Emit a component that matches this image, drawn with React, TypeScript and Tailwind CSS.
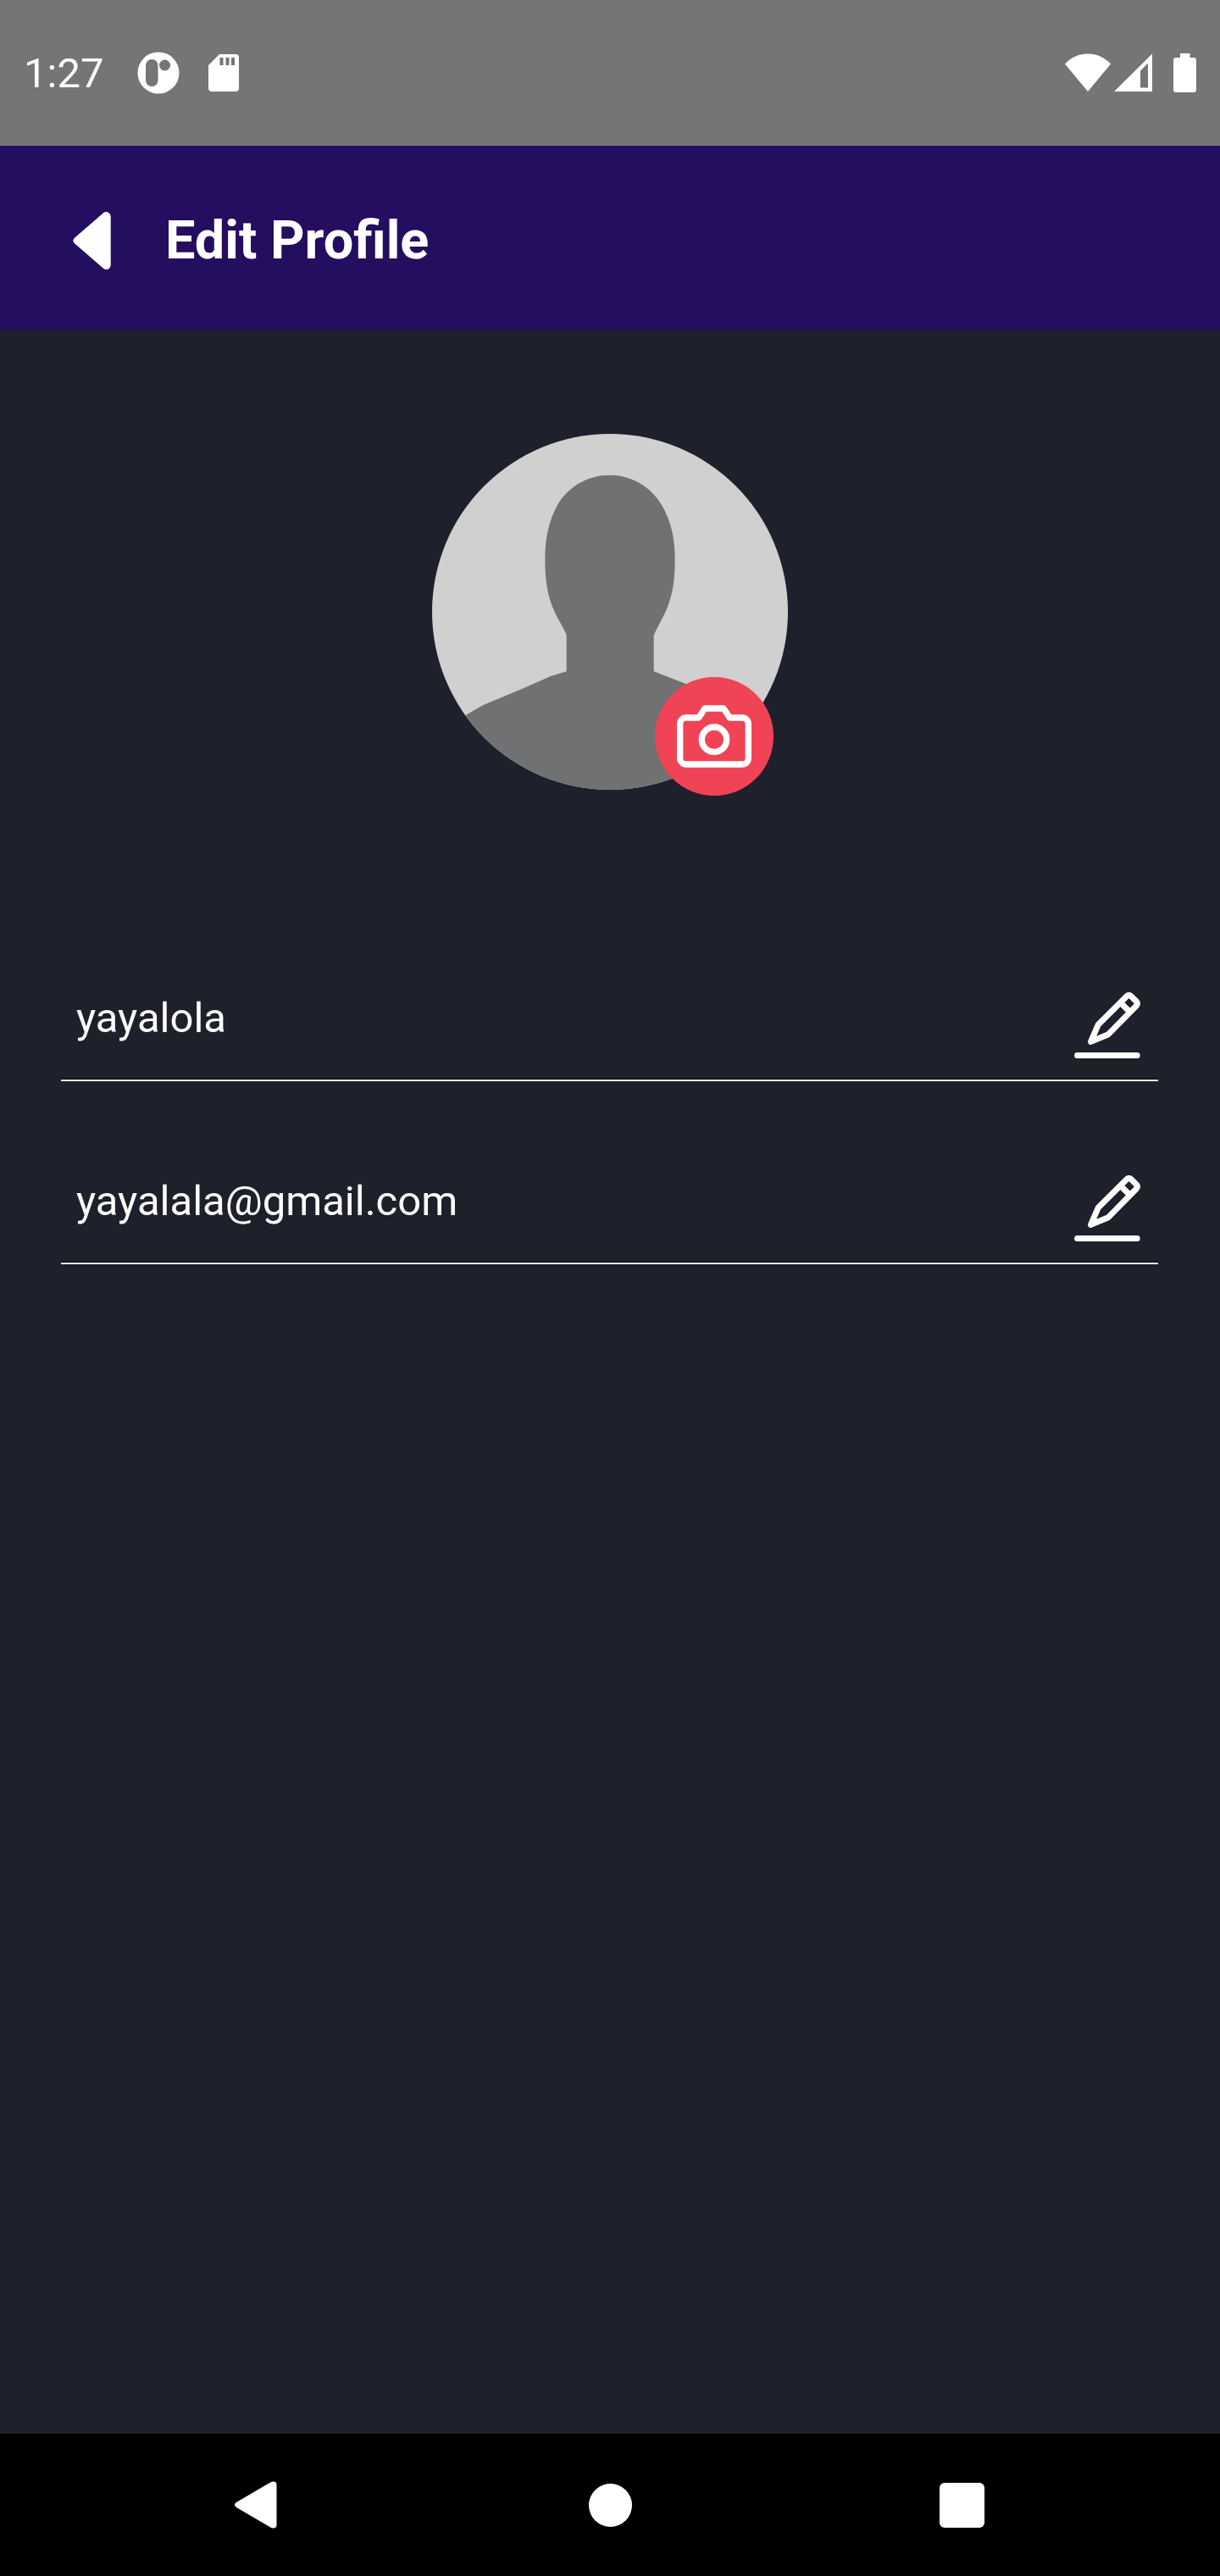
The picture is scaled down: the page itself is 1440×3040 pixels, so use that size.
import { FiCamera } from "react-icons/fi";

function StatusBar() {
  return (
    <div className="flex h-[172px] items-center justify-between bg-[#757575] px-7 text-white">
      <div className="flex items-center">
        <span className="pt-0.5 text-[49px] leading-[56px]">1:27</span>
        <svg className="ml-10 h-[50px] w-[50px]" viewBox="0 0 50 50" aria-hidden="true">
          <circle cx="25" cy="25" r="24.5" fill="#fff" />
          <rect x="10" y="9" width="14.5" height="32" rx="7.25" fill="#757575" />
          <circle cx="32.5" cy="16" r="6.5" fill="#757575" />
        </svg>
        <svg className="ml-[34px] h-[46px] w-9" viewBox="0 0 36 46" aria-hidden="true">
          <path
            d="M13 1H32a4 4 0 0 1 4 4V41a4 4 0 0 1-4 4H4a4 4 0 0 1-4-4V14z"
            fill="#fff"
          />
          <path d="M13.5 5h4v9h-4zM20.5 5h4v9h-4zM27 5h4v9h-4z" fill="#757575" />
        </svg>
      </div>
      <div className="flex items-center">
        <svg className="h-[46px] w-[54px]" viewBox="0 0 54 46" aria-hidden="true">
          <path d="M0 12.5C7 5 16 .5 27 .5S47 5 54 12.5L27 45z" fill="#fff" />
        </svg>
        <svg className="ml-1 h-[46px] w-[45px]" viewBox="0 0 45 46" aria-hidden="true">
          <path fillRule="evenodd" d="M45 .5V45H0zM40 11.5L31 20.5V40.5H40z" fill="#fff" />
        </svg>
        <svg className="ml-[25px] h-[46px] w-[27px]" viewBox="0 0 27 46" aria-hidden="true">
          <path
            d="M8 0H19.5V5H24a3 3 0 0 1 3 3V43a3 3 0 0 1-3 3H3a3 3 0 0 1-3-3V8a3 3 0 0 1 3-3H8z"
            fill="#fff"
          />
        </svg>
      </div>
    </div>
  );
}

function Header() {
  return (
    <header className="flex h-[217px] items-center bg-[#250d5f] pl-[86px] pt-1.5 text-white">
      <button type="button" aria-label="Back">
        <svg className="h-[68px] w-[45px]" viewBox="79 239 133 204" aria-hidden="true">
          <path
            d="M84 331L186 243Q196 236 205 242Q212 247 212 256V427Q212 436 205 441Q196 446 186 439L84 351Q74 341 84 331z"
            fill="#fff"
          />
        </svg>
      </button>
      <h1 className="ml-16 text-[63px] font-bold leading-[76px]">Edit Profile</h1>
    </header>
  );
}

function Avatar() {
  return (
    <div className="relative mx-auto h-[420px] w-[420px]">
      <svg
        className="h-full w-full rounded-full bg-[#d0d0d0]"
        viewBox="60 66 1260 1260"
        role="img"
        aria-label="Profile picture"
      >
        <path
          d="M690 212C770 212 836 256 873 318C908 378 920 440 920 508C920 572 914 622 899 664C886 706 858 748 845 780V907L960 952L1130 1025L1320 1130V1340H60V1130L180 1061L240 1027L385 966L480 924L536 907V777C520 742 492 702 479 658C465 616 460 566 460 508C460 440 472 374 506 314C545 252 610 212 690 212z"
          fill="#707172"
        />
      </svg>
      <button
        type="button"
        aria-label="Change picture"
        className="absolute -bottom-[7px] right-[17px] flex h-[140px] w-[140px] items-center justify-center rounded-full bg-[#f04456] text-white"
      >
        <FiCamera size={88} />
      </button>
    </div>
  );
}

function PencilIcon() {
  return (
    <svg
      className="h-[78px] w-[78px]"
      viewBox="115 96 233 234"
      fill="none"
      stroke="#fff"
      strokeWidth="21"
      strokeLinecap="round"
      strokeLinejoin="round"
      aria-hidden="true"
    >
      <path d="M173 271L199 211L300 110Q308 103 316 110L334 128Q341 136 334 144L235 245z" />
      <path d="M281 136L308 163" />
      <path d="M125 319.5H337" />
    </svg>
  );
}

type FieldProps = { label: string; type: string; value: string };

function Field({ label, type, value }: FieldProps) {
  return (
    <div>
      <div className="flex h-[124px] items-center pl-[18px] pr-[21px]">
        <input
          type={type}
          aria-label={label}
          defaultValue={value}
          className="h-20 min-w-0 flex-1 bg-transparent pb-5 text-[49px] leading-[60px] text-white outline-none"
        />
        <button type="button" aria-label={`Edit ${label}`} className="pb-0.5">
          <PencilIcon />
        </button>
      </div>
      <div className="h-[3px] border-t border-black bg-white" />
    </div>
  );
}

function NavBar() {
  return (
    <nav className="flex h-[168px] items-center justify-between bg-black px-[277px]">
      <button type="button" aria-label="Back" className="flex w-14">
        <svg className="h-14 w-[50px]" viewBox="0 0 50 56" aria-hidden="true">
          <path
            d="M2 25L43 1Q49-1 49.5 4V52Q49 57 43 55L2 31Q-2 28 2 25z"
            fill="#fff"
          />
        </svg>
      </button>
      <button type="button" aria-label="Home" className="flex w-14 justify-center">
        <span className="h-[51px] w-[51px] rounded-full bg-white" />
      </button>
      <button type="button" aria-label="Recent apps" className="flex w-14 justify-center">
        <span className="h-[53px] w-[53px] rounded-md bg-white" />
      </button>
    </nav>
  );
}

export default function App() {
  return (
    <div className="flex min-h-screen flex-col bg-[#1e202b] font-['Roboto',sans-serif]">
      <StatusBar />
      <Header />
      <main className="flex-1 pt-[123px]">
        <Avatar />
        <form className="mt-[217px] flex flex-col gap-[89px] pl-[72px] pr-[73px]">
          <Field label="Username" type="text" value="yayalola" />
          <Field label="Email" type="email" value="yayalala@gmail.com" />
        </form>
      </main>
      <NavBar />
    </div>
  );
}
